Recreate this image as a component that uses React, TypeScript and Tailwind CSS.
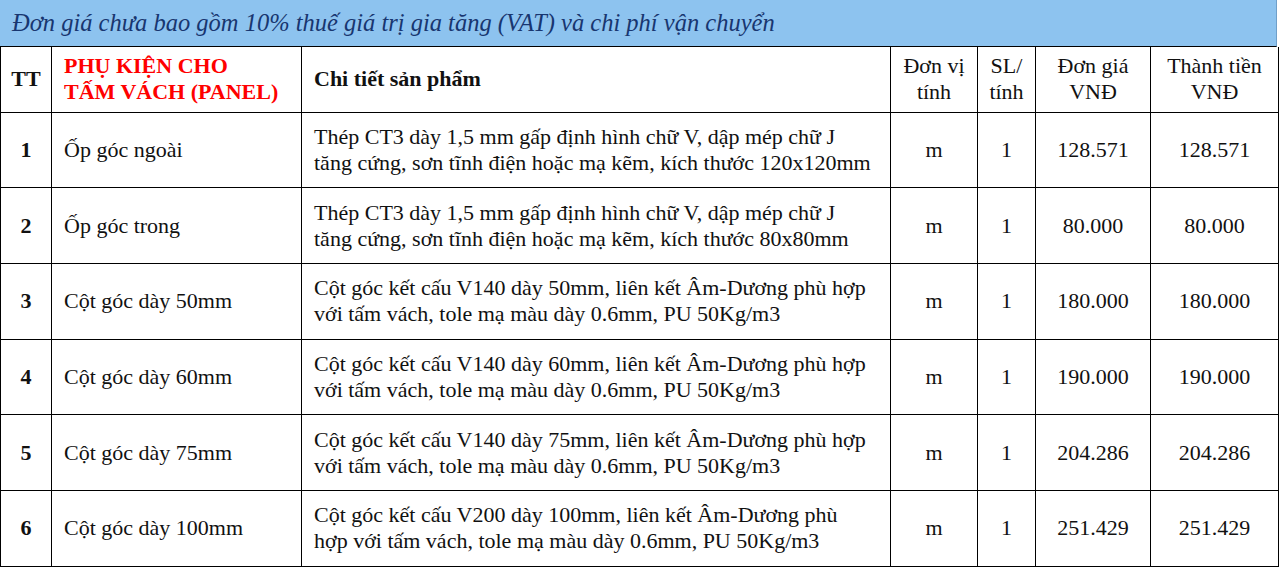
const rows = [
  {
    tt: "1",
    name: "Ốp góc ngoài",
    detail: ["Thép CT3 dày 1,5 mm gấp định hình chữ V, dập mép chữ J", "tăng cứng, sơn tĩnh điện hoặc mạ kẽm, kích thước 120x120mm"],
    price: "128.571",
  },
  {
    tt: "2",
    name: "Ốp góc trong",
    detail: ["Thép CT3 dày 1,5 mm gấp định hình chữ V, dập mép chữ J", "tăng cứng, sơn tĩnh điện hoặc mạ kẽm, kích thước 80x80mm"],
    price: "80.000",
  },
  {
    tt: "3",
    name: "Cột góc dày 50mm",
    detail: ["Cột góc kết cấu V140 dày 50mm, liên kết Âm-Dương phù hợp", "với tấm vách, tole mạ màu dày 0.6mm, PU 50Kg/m3"],
    price: "180.000",
  },
  {
    tt: "4",
    name: "Cột góc dày 60mm",
    detail: ["Cột góc kết cấu V140 dày 60mm, liên kết Âm-Dương phù hợp", "với tấm vách, tole mạ màu dày 0.6mm, PU 50Kg/m3"],
    price: "190.000",
  },
  {
    tt: "5",
    name: "Cột góc dày 75mm",
    detail: ["Cột góc kết cấu V140 dày 75mm, liên kết Âm-Dương phù hợp", "với tấm vách, tole mạ màu dày 0.6mm, PU 50Kg/m3"],
    price: "204.286",
  },
  {
    tt: "6",
    name: "Cột góc dày 100mm",
    detail: ["Cột góc kết cấu V200 dày 100mm, liên kết Âm-Dương phù", "hợp với tấm vách, tole mạ màu dày 0.6mm, PU 50Kg/m3"],
    price: "251.429",
  },
];

const cell = "border border-black align-middle";

export default function App() {
  return (
    <div className="h-[567px] w-[1279px] overflow-hidden bg-white font-['Liberation_Serif','Times_New_Roman',serif] text-[22px] leading-[26px] text-[#111]">
      {/* price note banner */}
      <div className="flex h-[47px] w-[1277px] items-center border-r border-b border-r-[#6f9fc9] border-b-black bg-[#8dc3ef] pl-[12px] text-[24.5px] italic text-[#183670]">
        Đơn giá chưa bao gồm 10% thuế giá trị gia tăng (VAT) và chi phí vận chuyển
      </div>

      <table className="w-[1278px] table-fixed border-collapse">
        <colgroup>
          <col className="w-[51px]" />
          <col className="w-[250px]" />
          <col className="w-[589px]" />
          <col className="w-[87px]" />
          <col className="w-[58px]" />
          <col className="w-[115px]" />
          <col className="w-[128px]" />
        </colgroup>
        <thead>
          <tr className="h-[65px]">
            <th className={`${cell} border-t-0 text-center font-bold`}>TT</th>
            <th className={`${cell} border-t-0 pl-[12px] text-left font-bold text-[#ff0000]`}>
              PHỤ KIỆN CHO
              <br />
              TẤM VÁCH (PANEL)
            </th>
            <th className={`${cell} border-t-0 pl-[12px] text-left font-bold`}>Chi tiết sản phẩm</th>
            <th className={`${cell} border-t-0 text-center font-normal`}>
              Đơn vị
              <br />
              tính
            </th>
            <th className={`${cell} border-t-0 text-center font-normal`}>
              SL/
              <br />
              tính
            </th>
            <th className={`${cell} border-t-0 text-center font-normal`}>
              Đơn giá
              <br />
              VNĐ
            </th>
            <th className={`${cell} border-t-0 text-center font-normal`}>
              Thành tiền
              <br />
              VNĐ
            </th>
          </tr>
        </thead>
        <tbody>
          {rows.map((r) => (
            <tr key={r.tt} className="h-[75.7px]">
              <td className={`${cell} text-center font-bold`}>{r.tt}</td>
              <td className={`${cell} pl-[12px]`}>{r.name}</td>
              <td className={`${cell} pl-[12px] whitespace-nowrap`}>
                {r.detail[0]}
                <br />
                {r.detail[1]}
              </td>
              <td className={`${cell} text-center`}>m</td>
              <td className={`${cell} text-center`}>1</td>
              <td className={`${cell} text-center`}>{r.price}</td>
              <td className={`${cell} text-center`}>{r.price}</td>
            </tr>
          ))}
        </tbody>
      </table>
    </div>
  );
}
